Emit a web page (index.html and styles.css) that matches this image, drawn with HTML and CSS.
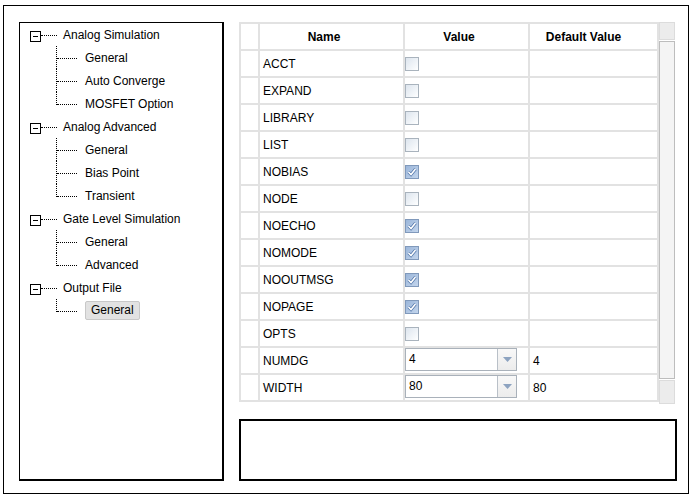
FILE: index.html
```html
<!DOCTYPE html>
<html>
<head>
<meta charset="utf-8">
<link rel="stylesheet" href="styles.css">
</head>
<body>
<div class="frame">
  <div class="tree">
    <div class="node"><span class="exp"><span class="minus"></span></span><span class="hdots"></span><span class="label">Analog Simulation</span></div>
    <div class="child"><span class="conn"></span><span class="label">General</span></div>
    <div class="child"><span class="conn"></span><span class="label">Auto Converge</span></div>
    <div class="child"><span class="conn last"></span><span class="label">MOSFET Option</span></div>
    <div class="node"><span class="exp"><span class="minus"></span></span><span class="hdots"></span><span class="label">Analog Advanced</span></div>
    <div class="child"><span class="conn"></span><span class="label">General</span></div>
    <div class="child"><span class="conn"></span><span class="label">Bias Point</span></div>
    <div class="child"><span class="conn last"></span><span class="label">Transient</span></div>
    <div class="node"><span class="exp"><span class="minus"></span></span><span class="hdots"></span><span class="label">Gate Level Simulation</span></div>
    <div class="child"><span class="conn"></span><span class="label">General</span></div>
    <div class="child"><span class="conn last"></span><span class="label">Advanced</span></div>
    <div class="node"><span class="exp"><span class="minus"></span></span><span class="hdots"></span><span class="label">Output File</span></div>
    <div class="child"><span class="conn last"></span><span class="label selected">General</span></div>
  </div>
  <div class="right">
    <div class="tablearea">
      <div class="grid">
        <div class="hc"></div><div class="hc">Name</div><div class="hc">Value</div><div class="hc wide">Default Value</div>

        <div class="c"></div><div class="c name">ACCT</div><div class="c val"><span class="cb"></span></div><div class="c"></div>
        <div class="c"></div><div class="c name">EXPAND</div><div class="c val"><span class="cb"></span></div><div class="c"></div>
        <div class="c"></div><div class="c name">LIBRARY</div><div class="c val"><span class="cb"></span></div><div class="c"></div>
        <div class="c"></div><div class="c name">LIST</div><div class="c val"><span class="cb"></span></div><div class="c"></div>
        <div class="c"></div><div class="c name">NOBIAS</div><div class="c val"><span class="cb on"><svg width="12" height="12" viewBox="0 0 12 12"><path d="M2.5 6 L5 8.5 L9.5 3" fill="none" stroke="#4f74a8" stroke-width="3"/><path d="M2.5 6 L5 8.5 L9.5 3" fill="none" stroke="#fff" stroke-width="1.6"/></svg></span></div><div class="c"></div>
        <div class="c"></div><div class="c name">NODE</div><div class="c val"><span class="cb"></span></div><div class="c"></div>
        <div class="c"></div><div class="c name">NOECHO</div><div class="c val"><span class="cb on"><svg width="12" height="12" viewBox="0 0 12 12"><path d="M2.5 6 L5 8.5 L9.5 3" fill="none" stroke="#4f74a8" stroke-width="3"/><path d="M2.5 6 L5 8.5 L9.5 3" fill="none" stroke="#fff" stroke-width="1.6"/></svg></span></div><div class="c"></div>
        <div class="c"></div><div class="c name">NOMODE</div><div class="c val"><span class="cb on"><svg width="12" height="12" viewBox="0 0 12 12"><path d="M2.5 6 L5 8.5 L9.5 3" fill="none" stroke="#4f74a8" stroke-width="3"/><path d="M2.5 6 L5 8.5 L9.5 3" fill="none" stroke="#fff" stroke-width="1.6"/></svg></span></div><div class="c"></div>
        <div class="c"></div><div class="c name">NOOUTMSG</div><div class="c val"><span class="cb on"><svg width="12" height="12" viewBox="0 0 12 12"><path d="M2.5 6 L5 8.5 L9.5 3" fill="none" stroke="#4f74a8" stroke-width="3"/><path d="M2.5 6 L5 8.5 L9.5 3" fill="none" stroke="#fff" stroke-width="1.6"/></svg></span></div><div class="c"></div>
        <div class="c"></div><div class="c name">NOPAGE</div><div class="c val"><span class="cb on"><svg width="12" height="12" viewBox="0 0 12 12"><path d="M2.5 6 L5 8.5 L9.5 3" fill="none" stroke="#4f74a8" stroke-width="3"/><path d="M2.5 6 L5 8.5 L9.5 3" fill="none" stroke="#fff" stroke-width="1.6"/></svg></span></div><div class="c"></div>
        <div class="c"></div><div class="c name">OPTS</div><div class="c val"><span class="cb"></span></div><div class="c"></div>
        <div class="c"></div><div class="c name">NUMDG</div><div class="c val"><div class="combo"><span class="ctext">4</span><span class="cbtn"><svg width="9" height="5" viewBox="0 0 9 5"><path d="M0 0 H9 L4.5 5 Z" fill="#8da3c0"/></svg></span></div></div><div class="c name">4</div>
        <div class="c"></div><div class="c name">WIDTH</div><div class="c val"><div class="combo"><span class="ctext">80</span><span class="cbtn"><svg width="9" height="5" viewBox="0 0 9 5"><path d="M0 0 H9 L4.5 5 Z" fill="#8da3c0"/></svg></span></div></div><div class="c name">80</div>
      </div>
      <div class="scroll">
        <div class="sb-top"></div>
        <div class="sb-thumb"></div>
        <div class="sb-bot"></div>
      </div>
    </div>
    <div class="textbox"></div>
  </div>
</div>
</body>
</html>
```

FILE: styles.css
```css
* { box-sizing: border-box; }
html, body { margin: 0; padding: 0; background: #fff; }
body {
  font-family: "Liberation Sans", Arial, sans-serif;
  font-size: 12px;
  color: #000;
}
.frame {
  margin: 5px 0 0 3px;
  width: 686px;
  height: 489px;
  border: 1px solid #000;
  padding: 16px 11px 12px 15px;
  display: flex;
  gap: 15px;
}
.tree {
  width: 205px;
  border: 1px solid #000;
  border-right-width: 2px;
  border-bottom-width: 2px;
  display: flex;
  flex-direction: column;
}
.node {
  height: 23px;
  display: flex;
  align-items: center;
  padding-left: 10px;
}
.exp {
  width: 11px;
  height: 11px;
  border: 1px solid #000;
  display: flex;
  align-items: center;
  justify-content: center;
  margin-top: 3px;
}
.minus {
  width: 5px;
  height: 1px;
  background: #000;
}
.hdots {
  width: 16px;
  border-top: 1px dotted #000;
  margin-top: 1px;
  margin-right: 6px;
}
.child {
  height: 23px;
  display: flex;
  align-items: flex-start;
  padding-left: 36px;
}
.conn {
  width: 21px;
  height: 23px;
  border-left: 1px dotted #000;
  margin-right: 8px;
  flex: none;
}
.conn::after {
  content: "";
  display: block;
  margin-top: 12px;
  border-top: 1px dotted #000;
}
.conn.last { height: 13px; }
.child .label {
  line-height: 23px;
  padding-top: 1px;
}
.label { white-space: nowrap; }
.child .label.selected {
  margin-top: 2px;
  line-height: 17px;
  padding: 0 5px;
  background: #e2e2e2;
  border: 1px solid #c8c8c8;
  border-radius: 2px;
}
.right {
  flex: 1;
  display: flex;
  flex-direction: column;
}
.tablearea {
  display: flex;
  height: 382px;
}
.grid {
  width: 420px;
  height: 380px;
  display: grid;
  grid-template-columns: 17px 143px 123px 127px;
  grid-auto-rows: 25px;
  gap: 2px;
  border: 2px solid #e2e2e2;
  background: #e2e2e2;
}
.hc {
  background: #fff;
  font-weight: bold;
  display: flex;
  align-items: center;
  justify-content: center;
  padding-right: 15px;
}
.hc.wide { padding-right: 20px; }
.hc:first-child { padding: 0; }
.c {
  background: #fff;
  display: flex;
  align-items: center;
}
.name { padding-left: 3px; }
.val { padding-left: 0; }
.cb {
  width: 14px;
  height: 14px;
  border: 1px solid #a9b3bd;
  background: linear-gradient(135deg, #dde5ee 0%, #f4f7fa 70%, #fff 100%);
  display: flex;
  align-items: center;
  justify-content: center;
}
.cb.on {
  border-color: #8099bb;
  background: linear-gradient(135deg, #9bb6da 0%, #c3d5ec 100%);
}
.combo {
  width: 112px;
  height: 23px;
  margin-top: -2px;
  border: 1px solid #a9b1ba;
  display: flex;
  background: #fff;
}
.ctext {
  flex: 1;
  padding-left: 3px;
  line-height: 21px;
}
.cbtn {
  width: 19px;
  border-left: 1px solid #b9c0c8;
  background: linear-gradient(#f8f8f8, #ececec);
  display: flex;
  align-items: center;
  justify-content: center;
}
.scroll {
  width: 16px;
  display: flex;
  flex-direction: column;
  height: 382px;
}
.sb-top {
  height: 18px;
  background: #ececec;
  border: 1px solid #dcdcdc;
}
.sb-thumb {
  height: 338px;
  margin-top: 1px;
  background: #f4f4f4;
  border: 1px solid #bdbdbd;
}
.sb-bot {
  flex: 1;
  margin-top: 1px;
  background: #ececec;
  border: 1px solid #dcdcdc;
}
.textbox {
  margin-top: 15px;
  flex: 1;
  border: 2px solid #000;
}
```
